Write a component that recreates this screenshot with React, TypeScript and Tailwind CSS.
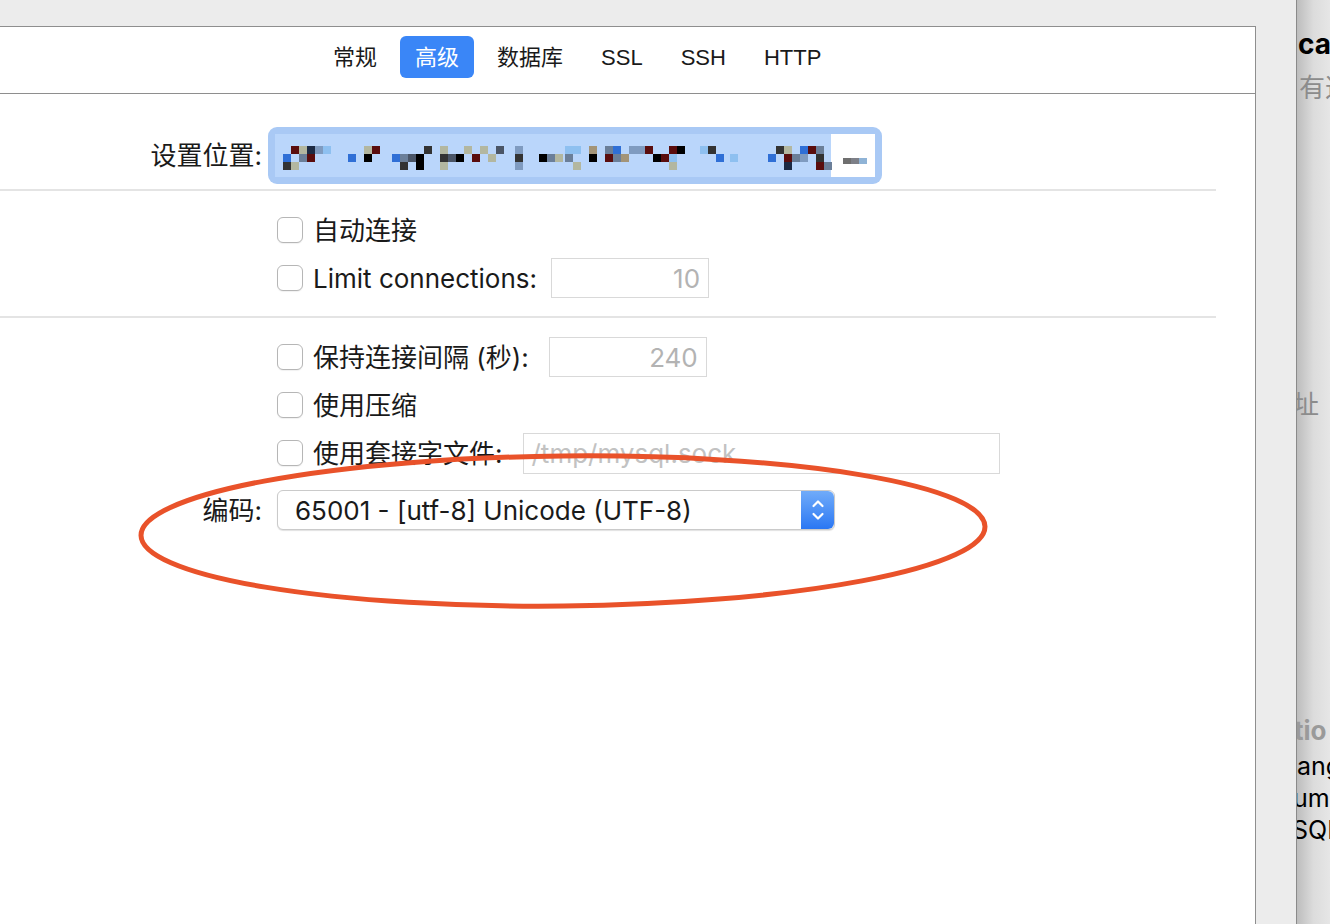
import React from "react";

const UI = "font-['Inter','Noto_Sans_CJK_SC',sans-serif]";
const TAB = "font-['Liberation_Sans','Noto_Sans_CJK_SC',sans-serif]";

const tabs = ["常规", "高级", "数据库", "SSL", "SSH", "HTTP"];

// pixelated (blurred-out) path inside the location field
const clusters: [number, number][] = [
  [15, 62], [72, 112], [124, 164], [172, 232], [247, 292], [297, 372],
  [377, 422], [432, 452], [462, 470], [500, 562],
];
const palette = ["#4a5566", "#6b7f99", "#2f6fd6", "#000000", "#7f9bc0", "#a39478", "#1c2a44", "#5a0d0d", "#8ec0f0", "#333333", "#b3b7a0"];

function buildCells() {
  let seed = 17;
  const rnd = () => {
    seed = (seed * 1103515245 + 12345) % 2147483648;
    return seed / 2147483648;
  };
  const cells: { x: number; y: number; c: string }[] = [];
  for (const [a, b] of clusters) {
    for (let x = a; x < b; x += 8) {
      if (rnd() < 0.5) cells.push({ x, y: 19, c: palette[Math.floor(rnd() * palette.length)] });
      if (rnd() < 0.65) cells.push({ x, y: 27, c: palette[Math.floor(rnd() * palette.length)] });
      if (rnd() < 0.12) cells.push({ x, y: 35, c: palette[Math.floor(rnd() * palette.length)] });
    }
  }
  return cells;
}
const cells = buildCells();

function LocationField() {
  return (
    <svg width="614" height="57" viewBox="0 0 614 57">
      <rect x="0" y="0" width="614" height="57" rx="9" fill="#a9c9f5" />
      <rect x="7" y="7" width="556" height="43" fill="#bad6fb" />
      <rect x="563" y="7" width="44" height="43" fill="#ffffff" />
      {cells.map((cell, i) => (
        <rect key={i} x={cell.x} y={cell.y} width="8" height="8" fill={cell.c} />
      ))}
      <rect x="575" y="31" width="8" height="6" fill="#6f6f6f" />
      <rect x="583" y="31" width="8" height="6" fill="#7d8088" />
      <rect x="591" y="31" width="8" height="6" fill="#8fb3d6" />
    </svg>
  );
}

function Checkbox() {
  return <div className="h-[26px] w-[26px] shrink-0 rounded-[6px] border border-[#b6b6b6] bg-white shadow-[0_1px_1px_rgba(0,0,0,0.06)]" />;
}

function NumberBox({ value }: { value: string }) {
  return (
    <div className="flex h-[40px] w-[158px] items-center justify-end border border-[#d9d9d9] pr-[8px] text-[26px] text-[#b3b3b3]">
      {value}
    </div>
  );
}

function CheckRow({ label, gap = "ml-[18px]", children }: { label: string; gap?: string; children?: React.ReactNode }) {
  return (
    <div className="flex h-[48px] items-center pl-[277px]">
      <Checkbox />
      <span className="ml-[10px] whitespace-nowrap text-[26px] text-[#1a1a1a]">{label}</span>
      {children ? <div className={gap}>{children}</div> : null}
    </div>
  );
}

function Separator() {
  return <div className="h-[2px] w-[1216px] bg-[#e4e4e4]" />;
}

export default function App() {
  return (
    <div className={`relative flex h-[924px] w-[1330px] overflow-hidden bg-[#ececec] ${UI}`}>
      <div className="w-[1296px] shrink-0 pt-[26px]">
        <div className="h-full w-[1256px] border-t border-r border-[#8e8e8e] bg-white">
          <div className={`flex h-[67px] items-start gap-2 border-b border-[#8e8e8e] pl-[318px] pt-[9px] ${TAB}`}>
            {tabs.map((t) => (
              <div
                key={t}
                className={`flex h-[42px] items-center rounded-[6px] px-[15px] text-[22px] ${
                  t === "高级" ? "bg-[#3a86f7] text-white" : "text-[#1a1a1a]"
                }`}
              >
                {t}
              </div>
            ))}
          </div>

          <div className="pt-[33px]">
            <div className="flex h-[57px] items-center">
              <div className="w-[262px] text-right text-[26px] text-[#1a1a1a]">设置位置:</div>
              <div className="ml-[6px]">
                <LocationField />
              </div>
            </div>
            <div className="mt-[5px]">
              <Separator />
            </div>
          </div>

          <div className="pt-[15px]">
            <CheckRow label="自动连接" />
            <CheckRow label="Limit connections:" gap="ml-[14px]">
              <NumberBox value="10" />
            </CheckRow>
            <div className="mt-[14px]">
              <Separator />
            </div>
          </div>

          <div className="pt-[15px]">
            <CheckRow label="保持连接间隔 (秒):" gap="ml-[20px]">
              <NumberBox value="240" />
            </CheckRow>
            <CheckRow label="使用压缩" />
            <CheckRow label="使用套接字文件:" gap="ml-[20px]">
              <div className="flex h-[41px] w-[477px] items-center border border-[#d9d9d9] pl-[8px] text-[26px] text-[#c2c2c2]">
                /tmp/mysql.sock
              </div>
            </CheckRow>
            <div className="mt-[13px] flex h-[40px] items-center">
              <div className="w-[262px] text-right text-[26px] text-[#1a1a1a]">编码:</div>
              <div className="ml-[15px] flex h-[40px] w-[558px] rounded-[6px] border border-[#cacaca] bg-white shadow-[0_1px_1px_rgba(0,0,0,0.12)]">
                <div className="flex flex-1 items-center pl-[17px] text-[26px] text-[#1a1a1a]">65001 - [utf-8] Unicode (UTF-8)</div>
                <div className="flex w-[33px] items-center justify-center rounded-r-[6px] bg-linear-to-b from-[#70abf9] to-[#2a77f3]">
                  <svg width="14" height="26" viewBox="0 0 14 26" fill="none" stroke="white" strokeWidth="2.2" strokeLinecap="round" strokeLinejoin="round">
                    <path d="M2.5 9 L7 4.5 L11.5 9" />
                    <path d="M2.5 17 L7 21.5 L11.5 17" />
                  </svg>
                </div>
              </div>
            </div>
          </div>
        </div>
      </div>

      <div className="flex flex-1 flex-col overflow-hidden border-l border-[#8a8a8a] bg-linear-to-r from-[#bdbdbd] via-[#dcdcdc] to-[#e6e6e6] whitespace-nowrap">
        <div className="mt-[28px] pl-[1px] text-[28px] font-bold leading-[32px] text-black">ca</div>
        <div className="mt-[12px] pl-[2px] text-[26px] leading-[32px] text-[#8c8c8c]">有这</div>
        <div className="mt-[285px] -ml-[4px] text-[26px] leading-[32px] text-[#8c8c8c]">址</div>
        <div className="mt-[294px] -ml-[3px] text-[26px] font-bold leading-[32px] text-[#9a9a9a]">tio</div>
        <div className="mt-[3px] text-[25px] leading-[32px] text-black">ang</div>
        <div className="-ml-[4px] text-[25px] leading-[32px] text-black">umS</div>
        <div className="-ml-[5px] text-[25px] leading-[32px] text-black">SQL</div>
      </div>

      <svg className="pointer-events-none absolute left-0 top-0" width="1330" height="924" viewBox="0 0 1330 924" fill="none">
        <ellipse cx="563" cy="531" rx="422" ry="75" stroke="#e9522a" strokeWidth="5" transform="rotate(-0.6 563 531)" />
      </svg>
    </div>
  );
}
